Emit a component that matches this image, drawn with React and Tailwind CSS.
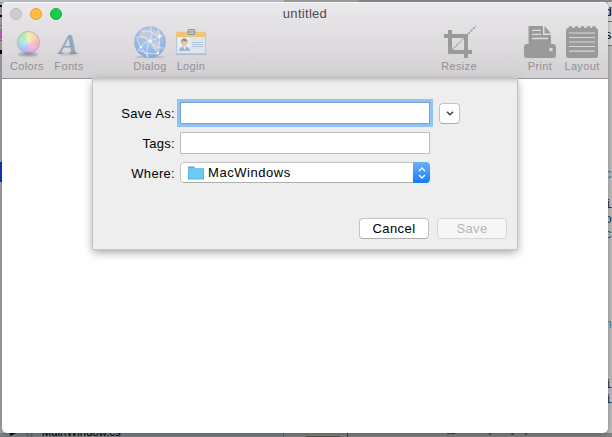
import React from "react";

function ColorsIcon() {
  return (
    <div className="flex h-8 w-8 flex-col items-center pl-[2px] pt-[5px]">
      <div className="h-[23px] w-[23px] shrink-0 rounded-full border border-[#b7b3bb] bg-[radial-gradient(circle,rgba(255,255,255,0.5),rgba(255,255,255,0.1)_70%),conic-gradient(#ecec98,#f6c993_50deg,#f3a7a8_95deg,#eaa0dc_145deg,#b4a0ee_190deg,#93bdf0_230deg,#8fe3dc_275deg,#a3e6a4_320deg,#ecec98)]" />
      <div className="-mt-px h-[3px] w-[20px] shrink-0 rounded-[50%] bg-black/35 blur-[1px]" />
    </div>
  );
}

function FontsIcon() {
  return (
    <div className="flex h-8 w-8 flex-col items-center">
      <span className="h-[28px] pt-[2px] pr-px font-['Liberation_Serif',serif] text-[29px] font-bold italic leading-[32px] text-[#93a5ba]">A</span>
      <div className="-mt-px h-[2px] w-[20px] shrink-0 rounded-[50%] bg-black/20 blur-[1px]" />
    </div>
  );
}

function GlobeIcon() {
  return (
    <svg viewBox="0 0 32 32" className="h-8 w-8 overflow-visible">
      <defs>
        <radialGradient id="globe" cx="50%" cy="35%" r="65%">
          <stop offset="0" stopColor="#b7cfec" />
          <stop offset="0.7" stopColor="#9bb8e2" />
          <stop offset="1" stopColor="#86a6d7" />
        </radialGradient>
        <clipPath id="disc"><circle cx="16" cy="16" r="15.7" /></clipPath>
      </defs>
      <ellipse cx="16" cy="31" rx="15" ry="1.2" fill="#b9b7bc" />
      <circle cx="16" cy="16" r="15.8" fill="url(#globe)" />
      <g clipPath="url(#disc)">
        <path d="M5 9 L9 4 L17 3 L18 6 L13 8 L16 11 L13 15 L10 12 L6 13Z M17 16 L23 14 L26 18 L23 25 L19 22Z M19 4 L25 5 L29 11 L24 12 L20 9Z" fill="#c8cbd2" />
        <path d="M4 24 Q10 16 16 15 T30 8 M3 11 Q10 9 16 15 Q22 23 30 22 M16 0 Q20 6 16 15 Q11 23 14 32 M4 24 Q14 29 24 28 M16 15 L24 28 M24 3 Q27 13 24 28 M7 5 Q17 4 25 11 M3 11 Q4 19 14 31" fill="none" stroke="#e0eefa" strokeWidth="0.9" opacity="0.9" />
        <g fill="#eef7ff">
          <circle cx="16" cy="15" r="1.7" /><circle cx="7" cy="21" r="1.2" /><circle cx="25.5" cy="10.5" r="1.4" /><circle cx="24" cy="27" r="1.2" />
        </g>
      </g>
    </svg>
  );
}

function LoginIcon() {
  return (
    <svg viewBox="0 0 32 32" className="h-8 w-8">
      <path d="M1 27 H31 L32 29 H0Z" fill="#aebfcd" />
      <rect x="1.5" y="5.5" width="29" height="22" rx="0.8" fill="#dce6ef" stroke="#b5c9da" />
      <rect x="1" y="5" width="30" height="6" fill="#eec579" />
      <path d="M1 5.4H31" stroke="#f3dcae" />
      <rect x="3" y="12" width="12" height="13" fill="#edf0f3" />
      <path d="M4 25 Q4 21 8 20.5 H11 Q15 21 15 25Z" fill="#9db8d5" />
      <path d="M8 20 L9.5 24 L11 20Z" fill="#f5f5f5" />
      <ellipse cx="9.3" cy="16.8" rx="2.6" ry="3.7" fill="#e5c4ae" />
      <path d="M6.3 18 Q5.3 12.5 9.3 12.5 T12.4 18 L11.5 15 Q9 15.5 7.5 14.6Z" fill="#a1816e" />
      <path d="M17 16.5H28 M17 18.5H28 M17 20.5H28" stroke="#b5c7de" strokeWidth="1" />
      <rect x="13.2" y="3.5" width="6.5" height="5" rx="0.5" fill="#c2ced0" stroke="#84989d" />
      <path d="M12.5 6H20.5" stroke="#84989d" />
    </svg>
  );
}

function CropIcon() {
  return (
    <svg viewBox="0 0 32 32" className="h-8 w-8 overflow-visible" fill="none" stroke="#9b9a9b">
      <path d="M7 4V26H29" strokeWidth="4" />
      <path d="M1 10H23V32" strokeWidth="4" />
      <path d="M9 24L21 12" strokeWidth="1.2" strokeDasharray="2 0.8" />
      <path d="M25 8L33 0" strokeWidth="1.4" strokeDasharray="2.6 0.9" />
    </svg>
  );
}

function PrintIcon() {
  return (
    <svg viewBox="0 0 32 32" className="h-8 w-8">
      <path d="M4.5 0H19V9H27V18H29Q32 18 32 21V29Q32 32 29 32H3Q0 32 0 29V21Q0 18 3 18H4.5Z" fill="#9b9a9b" />
      <path d="M20.5 0L27 7.5H20.5Z" fill="#9b9a9b" />
      <path d="M8 4.4H17 M8 8.4H17 M8 12.5H24" stroke="#dedcdf" strokeWidth="1.3" />
      <path d="M4 14.5V17.5 M27.3 14.5V17.5" stroke="#cfcdd0" strokeWidth="0.8" />
      <circle cx="27" cy="23.6" r="1.8" fill="#dedcdf" />
    </svg>
  );
}

function LayoutIcon() {
  return (
    <svg viewBox="0 0 32 32" className="h-8 w-8">
      <rect x="0" y="2" width="32" height="30" rx="2.5" fill="#9b9a9b" />
      <path d="M4.5 0.2V3 M10.5 0.2V3 M16.5 0.2V3 M22.5 0.2V3 M28 0.2V3" stroke="#9b9a9b" strokeWidth="3.6" />
      <path d="M3 7H29 M3 11.5H29 M3 16H29 M3 20.5H29 M3 25.2H29" stroke="#d9d7da" strokeWidth="1.2" />
    </svg>
  );
}

function ToolItem({ label, children }) {
  return (
    <div className="flex w-[42px] shrink-0 flex-col items-center">
      {children}
      <span className="whitespace-nowrap text-[11px] leading-4 tracking-[0.35px] text-[#929093]">{label}</span>
    </div>
  );
}

function Toolbar() {
  return (
    <header className="h-[77px] rounded-t-[5px] border-b border-[#99979a] bg-gradient-to-b from-[#ebe9ec] to-[#d2d0d3] shadow-[inset_0_1px_0_#f7f6f8]">
      <div className="grid h-6 grid-cols-[1fr_auto_1fr] items-center px-2">
        <div className="flex gap-2">
          <i className="h-3 w-3 rounded-full border border-[#b9b8ba] bg-[#cfcdcf]" />
          <i className="h-3 w-3 rounded-full border border-[#e2a134] bg-[#ffbd40]" />
          <i className="h-3 w-3 rounded-full border border-[#16ae36] bg-[#19ce4a]" />
        </div>
        <span className="text-[13px] leading-5 tracking-[0.3px] text-[#4d4b4f]">untitled</span>
      </div>
      <div className="flex justify-between pl-1 pr-[5px]">
        <div className="flex gap-[39px]">
          <div className="flex">
            <ToolItem label="Colors"><ColorsIcon /></ToolItem>
            <ToolItem label="Fonts"><FontsIcon /></ToolItem>
          </div>
          <div className="flex -space-x-px">
            <ToolItem label="Dialog"><GlobeIcon /></ToolItem>
            <ToolItem label="Login"><LoginIcon /></ToolItem>
          </div>
        </div>
        <div className="flex gap-[39px]">
          <ToolItem label="Resize"><CropIcon /></ToolItem>
          <div className="flex">
            <ToolItem label="Print"><PrintIcon /></ToolItem>
            <ToolItem label="Layout"><LayoutIcon /></ToolItem>
          </div>
        </div>
      </div>
    </header>
  );
}

function Field({ label, children }) {
  return (
    <div className="flex h-[22px] items-center gap-[5px]">
      <label className="w-[82px] whitespace-nowrap pt-[2px] text-right tracking-[0.3px]">{label}</label>
      {children}
    </div>
  );
}

function SaveSheet() {
  return (
    <section className="mx-auto flex h-[170px] w-[424px] flex-col justify-between bg-[#eeeeee] pb-[10px] pt-[23px] text-[13px] text-black shadow-[0_0_0_1px_#c5c5c5,0_3px_9px_rgba(0,0,0,0.4),inset_0_4px_4px_-3px_rgba(0,0,0,0.2)]">
      <div className="flex flex-col gap-[8px]">
        <Field label="Save As:">
          <div className="h-[22px] w-[250px] border border-[#75a5d8] bg-white shadow-[0_0_0_3px_#93c1f2]" />
          <button className="ml-1 mt-px flex h-[21px] w-[21px] items-center justify-center rounded-[4px] border border-[#c3c3c3] border-b-[#adadad] bg-white">
            <svg viewBox="0 0 8 5" className="h-[5px] w-2" fill="none" stroke="#404040" strokeWidth="1.5"><path d="M1 .8 L4 3.8 L7 .8" /></svg>
          </button>
        </Field>
        <Field label="Tags:">
          <div className="h-[22px] w-[250px] border border-[#bdbdbd] bg-white" />
        </Field>
        <Field label="Where:">
          <div className="mb-px flex h-[21px] w-[250px] items-stretch overflow-hidden rounded-[4px] bg-white">
            <div className="flex flex-1 items-center gap-1 rounded-l-[4px] border border-r-0 border-[#c3c3c3] border-b-[#adadad] pl-[7px]">
              <svg viewBox="0 0 16 14" className="h-[14px] w-4">
                <path d="M0 .5H6L7.5 2H16V13.5H0Z" fill="#51afd8" />
                <path d="M.7 3.5H15.3V12.7H.7Z" fill="#6bc9f3" />
                <path d="M0 3H16" stroke="#94d9f7" />
              </svg>
              <span className="tracking-[0.55px]">MacWindows</span>
            </div>
            <span className="flex w-[17px] items-center justify-center bg-gradient-to-b from-[#69b1fa] to-[#087bff]">
              <svg viewBox="0 0 8 12" className="h-3 w-2" fill="none" stroke="white" strokeWidth="1.4"><path d="M1 4 L4 1 L7 4 M1 8 L4 11 L7 8" /></svg>
            </span>
          </div>
        </Field>
      </div>
      <div className="flex justify-end gap-2 pr-[10px]">
        <button className="h-[21px] w-[70px] rounded-[4px] border border-[#c3c3c3] border-b-[#adadad] bg-white leading-[18px] tracking-[0.4px]">Cancel</button>
        <button className="h-[21px] w-[70px] rounded-[4px] border border-[#d8d8d8] bg-[#f6f6f6] leading-[18px] tracking-[0.4px] text-[#b7b7b7]">Save</button>
      </div>
    </section>
  );
}

function LeftEdge() {
  return (
    <div className="flex w-[2px] flex-col bg-[#a6a6ad]">
      <i className="mt-[3px] h-[2px] bg-black" />
      <i className="mt-[3px] h-px bg-[#b59a60]" />
      <i className="mt-[4px] h-[2px] bg-black" />
      <i className="mt-[8px] h-px bg-[#777]" />
      <i className="mt-[3px] h-[10px] bg-[#cb62c6]" />
      <i className="mt-px h-px bg-[#777]" />
      <i className="mt-[9px] h-[4px] bg-black" />
      <i className="mt-[108px] h-[20px] bg-[#1937ba]" />
    </div>
  );
}

/* Sliver of the code editor that shows past the window's right border. */
function EditorEdge() {
  return (
    <div className="flex w-[4px] flex-col items-end overflow-hidden bg-[#bebebe] font-['Liberation_Mono',monospace] text-[13px] leading-[15px] text-[#26344f]">
      <div className="flex h-[44px] w-full flex-col items-end border-b border-[#777] bg-[#dcdcdd]">
        <span className="mt-[3px] h-4 text-black">d</span>
        <i className="h-px w-full shrink-0 bg-[#777]" />
        <span className="mt-[6px] text-black">s</span>
      </div>
      <span className="mt-[121px] text-[#3084a5]">c</span>
      <span className="mt-[15px]">i</span>
      <span>o</span>
      <span className="text-[#315d71]">c</span>
      <span className="mt-[75px] text-[#3b80b9]">n</span>
      <span className="mt-[45px]">i</span>
      <span>i</span>
    </div>
  );
}

function BottomEdge() {
  return (
    <div className="flex h-[4px] overflow-hidden bg-[#868686] text-[11px] leading-[13px] text-black">
      <div className="flex w-[284px] items-end border-r border-[#666] bg-[#818489] pl-[10px]">
        <span className="-mb-[2px] w-[14px] text-[8px] leading-[13px]">▶</span>
        <span className="-mb-[2px] w-[18px] pl-[2px] text-[#555]">{"{}"}</span>
        <span className="-mb-[2px] tracking-[0.2px]">MainWindow.cs</span>
      </div>
      <div className="flex w-[64px] items-end border-r border-[#444] pl-[22px]"><i className="h-px w-[34px] bg-[#5c5c58]" /></div>
      <div className="flex items-start pl-[99px]">
        <i className="h-px w-2 bg-[#444]" />
        <i className="ml-[34px] h-[2px] w-[2px] bg-[#384c5c]" />
        <i className="ml-[20px] h-[2px] w-[3px] bg-[#5c4c3a]" />
        <i className="ml-[11px] h-[2px] w-[2px] bg-[#384c5c]" />
      </div>
    </div>
  );
}

function Backdrop() {
  return (
    <div className="absolute inset-0 flex flex-col overflow-hidden bg-[#b8b8ba]">
      <div className="flex h-[2px] shrink-0">
        <i className="w-[284px] bg-[#bfc5cd]" />
        <i className="w-[75px] bg-[#a2a2a0]" />
        <i className="flex-1 bg-[#8c8a8c]" />
      </div>
      <div className="flex min-h-0 flex-1 justify-between">
        <LeftEdge />
        <EditorEdge />
      </div>
      <BottomEdge />
    </div>
  );
}

export default function App() {
  return (
    <div className="relative h-[437px] w-[612px] overflow-hidden pl-[2px] pt-[2px] font-['Liberation_Sans',Arial,sans-serif]">
      <Backdrop />
      <main className="relative h-[431px] w-[606px] rounded-[5px] bg-white shadow-[0_2px_7px_rgba(0,0,0,0.3)]">
        <Toolbar />
        <SaveSheet />
      </main>
    </div>
  );
}
